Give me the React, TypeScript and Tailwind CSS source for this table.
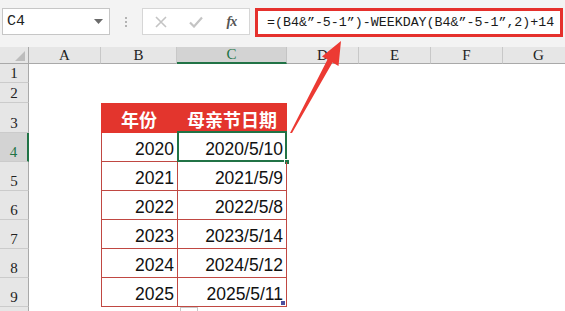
import React from "react";

const COLS = ["A", "B", "C", "D", "E", "F", "G"];
const COL_W = ["w-[72px]", "w-[76px]", "w-[110px]", "w-[72px]", "w-[72px]", "w-[72px]", "w-[72px]"];
const ROW_H = [
  "h-[19px]",
  "h-[20px]",
  "h-[30px]",
  "h-[29px]",
  "h-[29px]",
  "h-[29px]",
  "h-[29px]",
  "h-[29px]",
  "h-[29px]",
  "h-[29px]",
];

const DATA: [string, string][] = [
  ["2020", "2020/5/10"],
  ["2021", "2021/5/9"],
  ["2022", "2022/5/8"],
  ["2023", "2023/5/14"],
  ["2024", "2024/5/12"],
  ["2025", "2025/5/11"],
];

const serif = { fontFamily: '"Liberation Serif", "DejaVu Serif", serif' };
const mono = { fontFamily: '"Liberation Mono", "DejaVu Sans Mono", monospace' };
const sans = { fontFamily: '"Liberation Sans", Arial, sans-serif' };
const cjk = { fontFamily: '"Noto Sans CJK SC", "Noto Sans", sans-serif' };

function Toolbar() {
  return (
    <div className="h-[47px] bg-[#f3f3f3] flex items-start pt-[8px] pl-[2px]">
      {/* name box */}
      <div className="relative w-[108px] h-[27px] bg-white border border-[#c6c6c6] flex items-center pl-[4px]">
        <span className="text-[15px] text-[#222] leading-none" style={mono}>
          C4
        </span>
        <svg className="absolute right-[6px] top-[10px]" width="9" height="5" viewBox="0 0 9 5">
          <path d="M0 0 H9 L4.5 5 Z" fill="#6b6b6b" />
        </svg>
      </div>
      {/* splitter dots */}
      <div className="w-[32px] h-[27px] flex flex-col items-center justify-center gap-[2px]">
        <div className="w-[2px] h-[2px] bg-[#b3b3b3]" />
        <div className="w-[2px] h-[2px] bg-[#b3b3b3]" />
        <div className="w-[2px] h-[2px] bg-[#b3b3b3]" />
      </div>
      {/* cancel / enter / insert function */}
      <div className="w-[108px] h-[27px] bg-white border border-[#d6d6d6] flex items-center">
        <div className="w-[36px] flex justify-center">
          <svg width="12" height="12" viewBox="0 0 12 12">
            <path d="M1 1 L11 11 M11 1 L1 11" stroke="#c4c4c4" strokeWidth="1.6" />
          </svg>
        </div>
        <div className="w-[36px] flex justify-center">
          <svg width="14" height="12" viewBox="0 0 14 12">
            <path d="M1 6.5 L5 10.5 L13 1.5" stroke="#c4c4c4" strokeWidth="2.2" fill="none" />
          </svg>
        </div>
        <div className="w-[36px] flex justify-center">
          <span className="text-[14px] italic font-bold text-[#555] leading-none tracking-[-1px]" style={serif}>
            fx
          </span>
        </div>
      </div>
      {/* formula bar */}
      <div className="ml-[5px] w-[308px] h-[29px] bg-white border-[3px] border-[#e5302c] flex items-center pl-[9px]">
        <span className="text-[13.3px] text-[#1a1a1a] whitespace-nowrap leading-none" style={mono}>
          =(B4&”-5-1”)-WEEKDAY(B4&”-5-1”,2)+14
        </span>
      </div>
    </div>
  );
}

function ColumnHeader() {
  return (
    <div className="flex h-[17px]">
      <div className="relative w-[29px] shrink-0 bg-[#e6e6e6] border-r border-b border-[#a9a9a9]">
        <svg className="absolute right-[3px] bottom-[2px]" width="10" height="10" viewBox="0 0 10 10">
          <path d="M10 0 V10 H0 Z" fill="#bdbdbd" />
        </svg>
      </div>
      {COLS.map((c, i) => {
        const sel = c === "C";
        return (
          <div
            key={c}
            className={`${COL_W[i]} shrink-0 flex items-center justify-center text-[15px] leading-none ${
              sel
                ? "bg-[#d3d3d3] border-r border-r-[#c4c4c4] border-b-2 border-b-[#217346] text-[#217346]"
                : "bg-[#e6e6e6] border-r border-r-[#c8c8c8] border-b border-b-[#a9a9a9] text-[#222]"
            }`}
            style={serif}
          >
            {c}
          </div>
        );
      })}
    </div>
  );
}

function RowHeader({ n }: { n: number }) {
  const sel = n === 4;
  // the last row only peeks in at the bottom edge, so its number stays below the fold
  const label = n < 10 ? String(n) : "";
  return (
    <div
      className={`w-[29px] shrink-0 flex items-end justify-center pb-[1px] text-[15px] leading-[16px] border-b border-b-[#cbcbcb] ${
        sel
          ? "bg-[#d3d3d3] border-r-2 border-r-[#217346] text-[#217346]"
          : "bg-[#e6e6e6] border-r border-r-[#a9a9a9] text-[#222]"
      }`}
      style={serif}
    >
      {label}
    </div>
  );
}

function Cell({ row, col }: { row: number; col: number }) {
  const w = COL_W[col];
  const name = COLS[col];
  if (row === 3 && (name === "B" || name === "C")) {
    return (
      <div
        className={`${w} shrink-0 bg-[#e3352d] flex items-center justify-center pt-[2px] text-white font-bold text-[18px] leading-none`}
        style={cjk}
      >
        {name === "B" ? "年份" : "母亲节日期"}
      </div>
    );
  }
  if (row >= 4 && row <= 9 && (name === "B" || name === "C")) {
    const [year, date] = DATA[row - 4];
    const isC = name === "C";
    return (
      <div
        className={`${w} shrink-0 relative flex items-end justify-end pr-[3px] pb-[2px] border-b border-l border-[#c04842] ${
          isC ? "border-r" : ""
        } text-[17.5px] leading-[20px] text-[#111]`}
        style={sans}
      >
        {isC ? date : year}
        {isC && row === 4 && (
          <>
            <div className="absolute -left-[1px] -top-[2px] -right-[1px] -bottom-[1px] border-2 border-[#217346]" />
            <div className="absolute -right-[4px] -bottom-[4px] w-[6px] h-[6px] bg-[#217346] border border-white" />
          </>
        )}
        {isC && row === 9 && (
          <div className="absolute right-[1px] bottom-[1px] w-[4px] h-[4px] bg-[#4b4f9e]" />
        )}
      </div>
    );
  }
  return <div className={`${w} shrink-0 bg-white`} />;
}

function Sheet() {
  return (
    <div className="relative">
      <ColumnHeader />
      {ROW_H.map((h, i) => {
        const n = i + 1;
        return (
          <div key={n} className={`flex ${h}`}>
            <RowHeader n={n} />
            {COLS.map((_, ci) => (
              <Cell key={ci} row={n} col={ci} />
            ))}
          </div>
        );
      })}
      {/* paste options button peeking out below the table */}
      <div className="absolute left-[180px] top-[260px] w-[18px] h-[10px] border border-[#c8c8c8] bg-white" />
    </div>
  );
}

export default function App() {
  return (
    <div className="relative w-[565px] h-[311px] overflow-hidden bg-white">
      <Toolbar />
      <Sheet />
      {/* callout arrow from the table to the formula bar */}
      <svg
        className="absolute left-0 top-0 pointer-events-none"
        width="565"
        height="311"
        viewBox="0 0 565 311"
      >
        <polygon
          points="290,133 292,133 332.5,62.5 338.5,66 341,41 322,56.5 327.5,59.5"
          fill="#ec3a33"
        />
      </svg>
    </div>
  );
}
